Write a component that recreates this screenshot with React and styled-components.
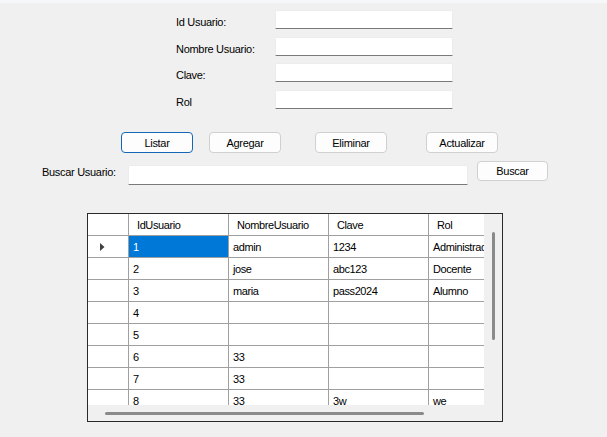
import { Fragment } from 'react';
import styled, { createGlobalStyle } from 'styled-components';

const GlobalStyle = createGlobalStyle`
    html, body {
        margin: 0;
        padding: 0;
        background-color: #F0F0F0;
    }
    body {
        font-family: "Liberation Sans", Arial, sans-serif;
        font-size: 11px;
        color: #000000;
    }
`

const fields = ['Id Usuario:', 'Nombre Usuario:', 'Clave:', 'Rol'];

const actions = [
    { text: 'Listar', offset: 121, focused: true },
    { text: 'Agregar', offset: 16 },
    { text: 'Eliminar', offset: 34 },
    { text: 'Actualizar', offset: 39 }
];

const columns = ['IdUsuario', 'NombreUsuario', 'Clave', 'Rol'];

const rows = [
    ['1', 'admin', '1234', 'Administrador'],
    ['2', 'jose', 'abc123', 'Docente'],
    ['3', 'maria', 'pass2024', 'Alumno'],
    ['4', '', '', ''],
    ['5', '', '', ''],
    ['6', '33', '', ''],
    ['7', '33', '', ''],
    ['8', '33', '3w', 'we'],
    ['9', '', '', '']
];

function RowArrow() {
    return (
        <svg width="5" height="8" viewBox="0 0 5 8">
            <polygon points="0,0 4.5,4 0,8" fill="#404040" />
        </svg>
    );
}

function App() {
    return (
        <Window>
            <GlobalStyle />
            <Fields>
                {fields.map((label) => (
                    <Fragment key={label}>
                        <FieldLabel>{label}</FieldLabel>
                        <TextBox $width={178} $height={19} />
                    </Fragment>
                ))}
            </Fields>

            <ButtonRow>
                {actions.map((a) => (
                    <Button key={a.text} $offset={a.offset} $focused={a.focused}>{a.text}</Button>
                ))}
            </ButtonRow>

            <SearchRow>
                <SearchLabel>Buscar Usuario:</SearchLabel>
                <SearchBox $width={340} $height={20} />
                <Button $offset={9} $width={71} $height={20}>Buscar</Button>
            </SearchRow>

            <GridFrame>
                <Viewport>
                    <Table>
                        <HeaderCell $corner />
                        {columns.map((c) => (
                            <HeaderCell key={c}>{c}</HeaderCell>
                        ))}
                        {rows.map((r, i) => (
                            <Fragment key={'row' + i}>
                                <RowHeader>{i === 0 && <RowArrow />}</RowHeader>
                                {r.map((v, j) => (
                                    <Cell key={j} $selected={i === 0 && j === 0}>{v}</Cell>
                                ))}
                            </Fragment>
                        ))}
                    </Table>
                </Viewport>
                <VScroll>
                    <VThumb />
                </VScroll>
                <HScroll>
                    <HThumb />
                </HScroll>
                <Corner />
            </GridFrame>
        </Window>
    );
}
export default App;

const Window = styled.div`
    width: 607px;
    height: 437px;
    box-sizing: border-box;
    border-top: 3px solid #F6F7F9;
    overflow: hidden;
    display: flex;
    flex-direction: column;
`

const Fields = styled.div`
    display: grid;
    grid-template-columns: 99px 178px;
    grid-auto-rows: 19px;
    row-gap: 7.5px;
    margin: 7px 0 0 176px;
`

const FieldLabel = styled.label`
    padding-top: 4px;
    line-height: 16px;
    letter-spacing: -0.3px;
    white-space: nowrap;
`

const TextBox = styled.input`
    box-sizing: border-box;
    width: ${(p) => p.$width}px;
    height: ${(p) => p.$height}px;
    margin: 0;
    padding: 0 4px;
    background-color: #FFFFFF;
    border: 1px solid #ECECEC;
    border-bottom-color: #7A7A7A;
    border-radius: 2px 2px 0 0;
    font-family: inherit;
    font-size: 11px;
    outline: none;
`

const ButtonRow = styled.div`
    display: flex;
    margin-top: 23.5px;
`

const Button = styled.button`
    box-sizing: border-box;
    width: ${(p) => p.$width || 72}px;
    height: ${(p) => p.$height || 21}px;
    margin: 0 0 0 ${(p) => p.$offset}px;
    padding: 0;
    background-color: #FDFDFD;
    border: 1px solid ${(p) => (p.$focused ? '#1366B8' : '#D0D0D0')};
    border-radius: 4px;
    font-family: inherit;
    font-size: 11px;
    letter-spacing: -0.3px;
    color: #000000;
`

const SearchRow = styled.div`
    display: flex;
    align-items: flex-start;
    margin-top: 8px;
    padding-left: 42px;
`

const SearchLabel = styled.label`
    width: 86px;
    margin-top: 3px;
    line-height: 17px;
    letter-spacing: -0.3px;
    white-space: nowrap;
`

const SearchBox = styled(TextBox)`
    margin-top: 4px;
`

const GridFrame = styled.div`
    box-sizing: border-box;
    width: 416px;
    height: 209px;
    margin: 28px 0 0 87px;
    border: 1px solid #2A2A2A;
    background-color: #F0F0F0;
    display: grid;
    grid-template-columns: 1fr 18px;
    grid-template-rows: 1fr 16px;
`

const Viewport = styled.div`
    overflow: hidden;
    background-color: #FFFFFF;
`

const Table = styled.div`
    display: grid;
    grid-template-columns: 41px 100px 100px 100px 100px;
    grid-auto-rows: 22px;
    width: max-content;
    font-size: 11px;
    letter-spacing: -0.4px;
`

const BaseCell = styled.div`
    box-sizing: border-box;
    border-right: 1px solid #A0A0A0;
    border-bottom: 1px solid #A0A0A0;
    background-color: #FFFFFF;
    display: flex;
    align-items: center;
    white-space: nowrap;
    overflow: hidden;
`

const HeaderCell = styled(BaseCell)`
    padding-left: ${(p) => (p.$corner ? 0 : 8)}px;
`

const RowHeader = styled(BaseCell)`
    padding-left: 12px;
`

const Cell = styled(BaseCell)`
    padding-left: 4px;
    background-color: ${(p) => (p.$selected ? '#0078D7' : '#FFFFFF')};
    color: ${(p) => (p.$selected ? '#FFFFFF' : '#000000')};
`

const VScroll = styled.div`
    display: flex;
    justify-content: center;
    padding-top: 18px;
`

const VThumb = styled.div`
    width: 3px;
    height: 108px;
    border-radius: 2px;
    background-color: #8A8A8A;
`

const HScroll = styled.div`
    display: flex;
    align-items: center;
    padding-left: 17px;
`

const HThumb = styled.div`
    width: 319px;
    height: 3px;
    border-radius: 2px;
    background-color: #8A8A8A;
`

const Corner = styled.div`
    background-color: #F0F0F0;
`
